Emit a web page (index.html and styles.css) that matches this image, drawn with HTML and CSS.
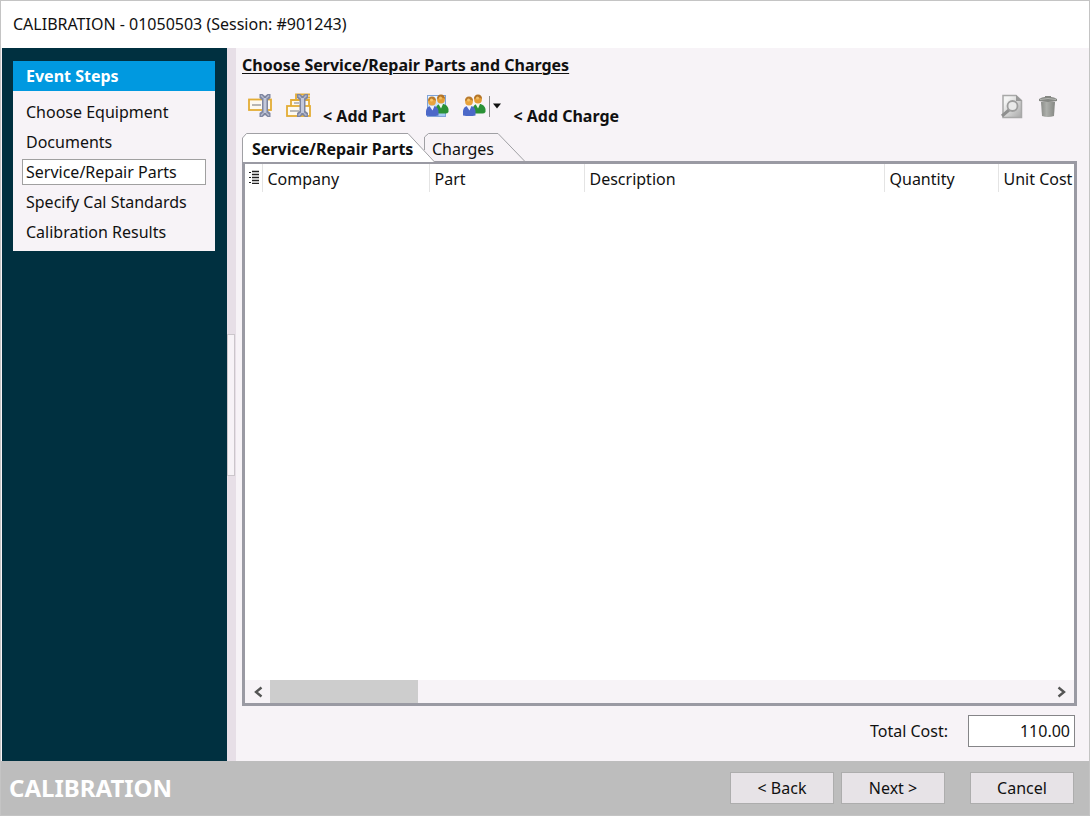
FILE: index.html
```html
<!DOCTYPE html>
<html lang="en">
<head>
    <meta charset="UTF-8">
    <meta name="viewport" content="width=device-width, initial-scale=1.0">
    <title>CALIBRATION - 01050503</title>
    <link rel="stylesheet" href="styles.css">
</head>
<body>
    <div class="window">
        <header class="title-bar">CALIBRATION - 01050503 (Session: #901243)</header>

        <div class="content">
            <aside class="sidebar">
                <nav class="steps">
                    <h2>Event Steps</h2>
                    <a href="#">Choose Equipment</a>
                    <a href="#">Documents</a>
                    <a href="#" class="current">Service/Repair Parts</a>
                    <a href="#">Specify Cal Standards</a>
                    <a href="#">Calibration Results</a>
                </nav>
            </aside>

            <div class="splitter"><div class="grip"></div></div>

            <main class="main">
                <h1>Choose Service/Repair Parts and Charges</h1>

                <div class="toolbar">
                    <button class="tool" aria-label="Add part">
                        <svg width="26" height="28" viewBox="0 0 26 28">
                            <rect x="1" y="6.500" width="22" height="10.500" fill="#fdf9f0" stroke="#e3ac35" stroke-width="1.800"/>
                            <path d="M4 12h9" stroke="#a5a5a5" stroke-width="1.600"/>
                            <path d="M11.500 1h3l2.500 2 2.500-2h3v4l-2.500 2v11l2.500 2v4h-3L17 22l-2.500 2h-3v-4l2.500-2V7l-2.500-2z" fill="#7f86a0"/>
                            <path d="M17 5v15" stroke="#c3c8da" stroke-width="3"/>
                            <path d="M13 2.500l2.500 2.500M21 2.500L18.500 5M13 22.500l2.500-2.500M21 22.500L18.500 20" stroke="#b4b9cd" stroke-width="1.500"/>
                        </svg>
                    </button>
                    <button class="tool tool-multi" aria-label="Add several parts">
                        <svg width="26" height="28" viewBox="0 0 26 28">
                            <path d="M10 7V1.500h14M24 4.500h-4" fill="none" stroke="#e3ac35" stroke-width="1.800"/>
                            <path d="M5 13V7h18v6" fill="#fdf9f0" stroke="#e3ac35" stroke-width="1.800"/>
                            <rect x="1" y="13" width="23" height="10" fill="#fdf9f0" stroke="#e3ac35" stroke-width="1.800"/>
                            <path d="M4 18h9M8 10h5" stroke="#a5a5a5" stroke-width="1.600"/>
                            <path d="M11 1h3l2.500 2L19 1h3v4l-2.500 2v11l2.500 2v4h-3l-2.500-2-2.500 2h-3v-4l2.500-2V7L11 5z" fill="#7f86a0"/>
                            <path d="M16.500 5v15" stroke="#c3c8da" stroke-width="3"/>
                            <path d="M12.500 2.500L15 5M20.500 2.500L18 5M12.500 22.500L15 20M20.500 22.500L18 20" stroke="#b4b9cd" stroke-width="1.500"/>
                        </svg>
                    </button>
                    <span class="tool-label">&lt; Add Part</span>
                    <button class="tool" aria-label="Add charge">
                        <svg width="24" height="28" viewBox="0 0 24 28">
                            <defs>
                                <linearGradient id="frame" x2="0" y2="1">
                                    <stop offset="0" stop-color="#eef6fe"/>
                                    <stop offset="1" stop-color="#9cc6f0"/>
                                </linearGradient>
                                <g id="people">
                                    <path d="M10.500 20.500v-4q.500-4.500 4-5.500h4q4 1 5 5v3q-1 1.500-3 1.500z" fill="#2a9136"/>
                                    <path d="M13.500 11h4.500l-2 4.500z" fill="#f0f8ee"/>
                                    <circle cx="16" cy="6.500" r="3.900" fill="#e39c35"/>
                                    <path d="M12 6q0-4.500 4-4.500T20 6q-2-2-4-1.500T12 6z" fill="#b37428"/>
                                    <circle cx="15.500" cy="5" r="1.500" fill="#f3bd62"/>
                                    <path d="M1 22.500v-4.500q.500-4 4-5h4.500q3.500 1 4 5v4.500q-6 1-12.500 0z" fill="#4c68c8"/>
                                    <path d="M4.500 13h5L7.500 17.500z" fill="#f0f3fd"/>
                                    <circle cx="7" cy="8.500" r="3.900" fill="#e8a33c"/>
                                    <path d="M3 8q0-4.500 4-4.500T11 8Q9 6 7 6.500T3 8z" fill="#b97a2c"/>
                                    <circle cx="6.500" cy="7" r="1.500" fill="#f6c56c"/>
                                </g>
                            </defs>
                            <rect x="2.500" y="2.500" width="18" height="21" fill="url(#frame)" stroke="#7fa3d8"/>
                            <use href="#people"/>
                        </svg>
                    </button>
                    <button class="tool tool-people" aria-label="Choose charge">
                        <svg width="24" height="28" viewBox="0 0 24 28"><use href="#people"/></svg>
                    </button>
                    <button class="tool tool-menu" aria-label="More charges">
                        <svg width="14" height="28" viewBox="0 0 14 28">
                            <path d="M1.500 3v21" stroke="#8c8c8c"/>
                            <path d="M5 10.500h8l-4 5z" fill="#111"/>
                        </svg>
                    </button>
                    <span class="tool-label">&lt; Add Charge</span>

                    <button class="tool tool-end" aria-label="Preview">
                        <svg width="24" height="28" viewBox="0 0 24 28">
                            <defs>
                                <linearGradient id="sheet" x1="0" y1="0" x2="1" y2="1">
                                    <stop offset="0.200" stop-color="#f4f4f4"/>
                                    <stop offset="1" stop-color="#a8a8a8"/>
                                </linearGradient>
                            </defs>
                            <path d="M3 2.500h13l5.500 5v17H3z" fill="url(#sheet)" stroke="#a8a8a8" stroke-width="1.500"/>
                            <path d="M16 2v6h6z" fill="#999"/>
                            <path d="M9 17l-7 6" stroke="#8f8f8f" stroke-width="3"/>
                            <circle cx="12.500" cy="13" r="5" fill="#e9e9e9" stroke="#9d9d9d" stroke-width="1.800"/>
                        </svg>
                    </button>
                    <button class="tool tool-trash" aria-label="Delete">
                        <svg width="20" height="28" viewBox="0 0 20 28">
                            <defs>
                                <linearGradient id="can" x1="0" x2="1">
                                    <stop offset="0" stop-color="#8b8d89"/>
                                    <stop offset="0.400" stop-color="#adafab"/>
                                    <stop offset="1" stop-color="#858783"/>
                                </linearGradient>
                            </defs>
                            <path d="M3 9h14l-1 14q-6 2-12 0z" fill="url(#can)"/>
                            <path d="M1 8V6q3-2 6-2V3h6v1q3 0 6 2v2q-9 2-18 0z" fill="#858783"/>
                            <path d="M2 6.500q8-2 16 0" stroke="#b5b7b3" fill="none"/>
                        </svg>
                    </button>
                </div>

                <div class="tabs" role="tablist">
                    <button class="tab active" role="tab" aria-selected="true">
                        <svg class="tab-shape" viewBox="0 0 194 30" preserveAspectRatio="none">
                            <path d="M0.500 30V5l4-4.500H166L193.500 30" fill="#fff" stroke="#a0a0a4"/>
                            <path d="M0 29.500h194" stroke="#9a9aa3"/>
                        </svg>
                        <span>Service/Repair Parts</span>
                    </button>
                    <button class="tab" role="tab" aria-selected="false">
                        <svg class="tab-shape" viewBox="0 0 101 30" preserveAspectRatio="none">
                            <path d="M0.500 17V4l4-3.500H74L100.500 28" fill="none" stroke="#a0a0a4"/>
                        </svg>
                        <span>Charges</span>
                    </button>
                </div>

                <div class="grid">
                    <div class="grid-view">
                        <table>
                            <colgroup>
                                <col class="col-menu">
                                <col class="col-company">
                                <col class="col-part">
                                <col class="col-description">
                                <col class="col-quantity">
                                <col class="col-cost">
                            </colgroup>
                            <thead>
                                <tr>
                                    <th class="menu-cell">
                                        <svg width="12" height="14" viewBox="0 0 12 14">
                                            <path d="M4 1.500h7M4 4.500h7M4 7.500h7M4 10.500h7M4 13.500h7" stroke="#222" stroke-width="1.500"/>
                                            <path d="M1 2.500h2M1 7.500h2M1 12.500h2" stroke="#222"/>
                                        </svg>
                                    </th>
                                    <th>Company</th>
                                    <th>Part</th>
                                    <th>Description</th>
                                    <th>Quantity</th>
                                    <th>Unit Cost</th>
                                </tr>
                            </thead>
                        </table>
                    </div>
                    <div class="scrollbar">
                        <button class="scroll-arrow" aria-label="Scroll left">
                            <svg width="10" height="12" viewBox="0 0 10 12"><path d="M8.500 1.500L3 6l5.500 4.500" fill="none" stroke="#555" stroke-width="2.400"/></svg>
                        </button>
                        <div class="scroll-track"><div class="scroll-thumb"></div></div>
                        <button class="scroll-arrow" aria-label="Scroll right">
                            <svg width="10" height="12" viewBox="0 0 10 12"><path d="M1.500 1.500L7 6l-5.500 4.500" fill="none" stroke="#555" stroke-width="2.400"/></svg>
                        </button>
                    </div>
                </div>

                <div class="total">
                    <label for="total-cost">Total Cost:</label>
                    <input id="total-cost" type="text" value="110.00">
                </div>
            </main>
        </div>

        <footer class="footer">
            <strong>CALIBRATION</strong>
            <button class="btn">&lt; Back</button>
            <button class="btn">Next &gt;</button>
            <button class="btn btn-cancel">Cancel</button>
        </footer>
    </div>
</body>
</html>
```
FILE: styles.css
```css
* {
    margin: 0;
    padding: 0;
    box-sizing: border-box;
}
body {
    font-family: "Noto Sans", "Open Sans", sans-serif;
    font-size: 16px;
    line-height: 20px;
    color: #111;
}
button, input {
    font: inherit;
    color: inherit;
}
.window {
    display: flex;
    flex-direction: column;
    min-height: 100vh;
    background: #f7f3f7;
    border: 1px solid #c4c4c4;
}
.title-bar {
    height: 47px;
    padding: 13px 12px;
    background: #fff;
}
.content {
    display: flex;
    flex: 1;
    padding: 0 1px;
}

/* Left side steps */
.sidebar {
    width: 225px;
    padding: 13px 12px 13px 11px;
    background: #003040;
}
.steps {
    display: flex;
    flex-direction: column;
    padding-bottom: 4px;
    background: #f7f3f7;
}
.steps h2 {
    height: 30px;
    padding: 5px 13px;
    margin-bottom: 6px;
    background: #0099e0;
    color: #fff;
    font-size: 16px;
}
.steps a {
    height: 26px;
    margin: 2px 9px;
    padding: 2px 3px;
    border: 1px solid transparent;
    color: #111;
    text-decoration: none;
    white-space: nowrap;
}
.steps a.current {
    background: #fff;
    border-color: #a0a0a0;
}

.splitter {
    display: flex;
    align-items: center;
    width: 9px;
    background: #e7dfe7;
}
.grip {
    width: 8px;
    height: 142px;
    background: #f7f3f7;
    border: 1px solid #cbc6cb;
}

/* Right side */
.main {
    display: flex;
    flex: 1;
    flex-direction: column;
    min-width: 0;
    padding: 7px 11px 14px 6px;
}
h1 {
    font-size: 16px;
    line-height: 20px;
    text-decoration: underline;
    text-decoration-thickness: 1px;
    text-underline-offset: 2px;
}
.toolbar {
    display: flex;
    align-items: flex-start;
    height: 58px;
    padding: 18px 19px 0 6px;
}
.tool {
    display: flex;
    height: 28px;
    border: none;
    background: none;
}
.tool-multi {
    margin-left: 12px;
}
.tool-people {
    margin-left: 13px;
}
.tool-menu {
    margin-left: 2px;
}
.tool-label {
    margin: 13px 20px 0 11px;
    font-weight: bold;
    white-space: nowrap;
}
.tool-end {
    margin-left: auto;
}
.tool-trash {
    margin-left: 14px;
}

.tabs {
    display: flex;
    height: 30px;
}
.tab {
    position: relative;
    width: 101px;
    padding: 2px 0 0 8px;
    border: none;
    background: none;
    text-align: left;
    white-space: nowrap;
}
.tab.active {
    z-index: 1;
    width: 194px;
    margin-right: -12px;
    font-weight: bold;
    padding-left: 10px;
}
.tab-shape {
    position: absolute;
    inset: 0;
    width: 100%;
    height: 100%;
}
.tab span {
    position: relative;
}

.grid {
    display: flex;
    flex: 1;
    flex-direction: column;
    margin-top: -2px;
    border: 3px solid #9a9aa3;
    background: #fff;
}
.grid-view {
    flex: 1;
    overflow: hidden;
}
table {
    width: 900px;
    table-layout: fixed;
    border-collapse: collapse;
}
.col-menu { width: 17px; }
.col-company { width: 167px; }
.col-part { width: 155px; }
.col-description { width: 300px; }
.col-quantity { width: 114px; }
th {
    height: 28px;
    padding: 2px 5px 0;
    border-right: 1px solid #e4e4e4;
    font-weight: normal;
    text-align: left;
    white-space: nowrap;
}
.menu-cell {
    padding: 0 0 0 3px;
}
.scrollbar {
    display: flex;
    height: 23px;
    background: #f7f3f7;
}
.scroll-arrow {
    display: flex;
    align-items: center;
    justify-content: center;
    width: 25px;
    border: none;
    background: none;
}
.scroll-track {
    flex: 1;
}
.scroll-thumb {
    width: 19%;
    height: 100%;
    background: #cdcdcd;
}

.total {
    display: flex;
    align-items: center;
    justify-content: flex-end;
    gap: 20px;
    padding: 9px 2px 0 0;
}
.total input {
    width: 107px;
    height: 32px;
    padding: 0 4px;
    border: 1px solid #858588;
    background: #fff;
    text-align: right;
}

.footer {
    display: flex;
    align-items: center;
    gap: 7px;
    height: 54px;
    padding: 0 15px 0 8px;
    background: #bdbdbd;
}
.footer strong {
    flex: 1;
    color: #fff;
    font-size: 24px;
}
.btn {
    width: 104px;
    height: 32px;
    border: 1px solid #adadad;
    background: #e7e3e7;
}
.btn-cancel {
    margin-left: 18px;
}
```
